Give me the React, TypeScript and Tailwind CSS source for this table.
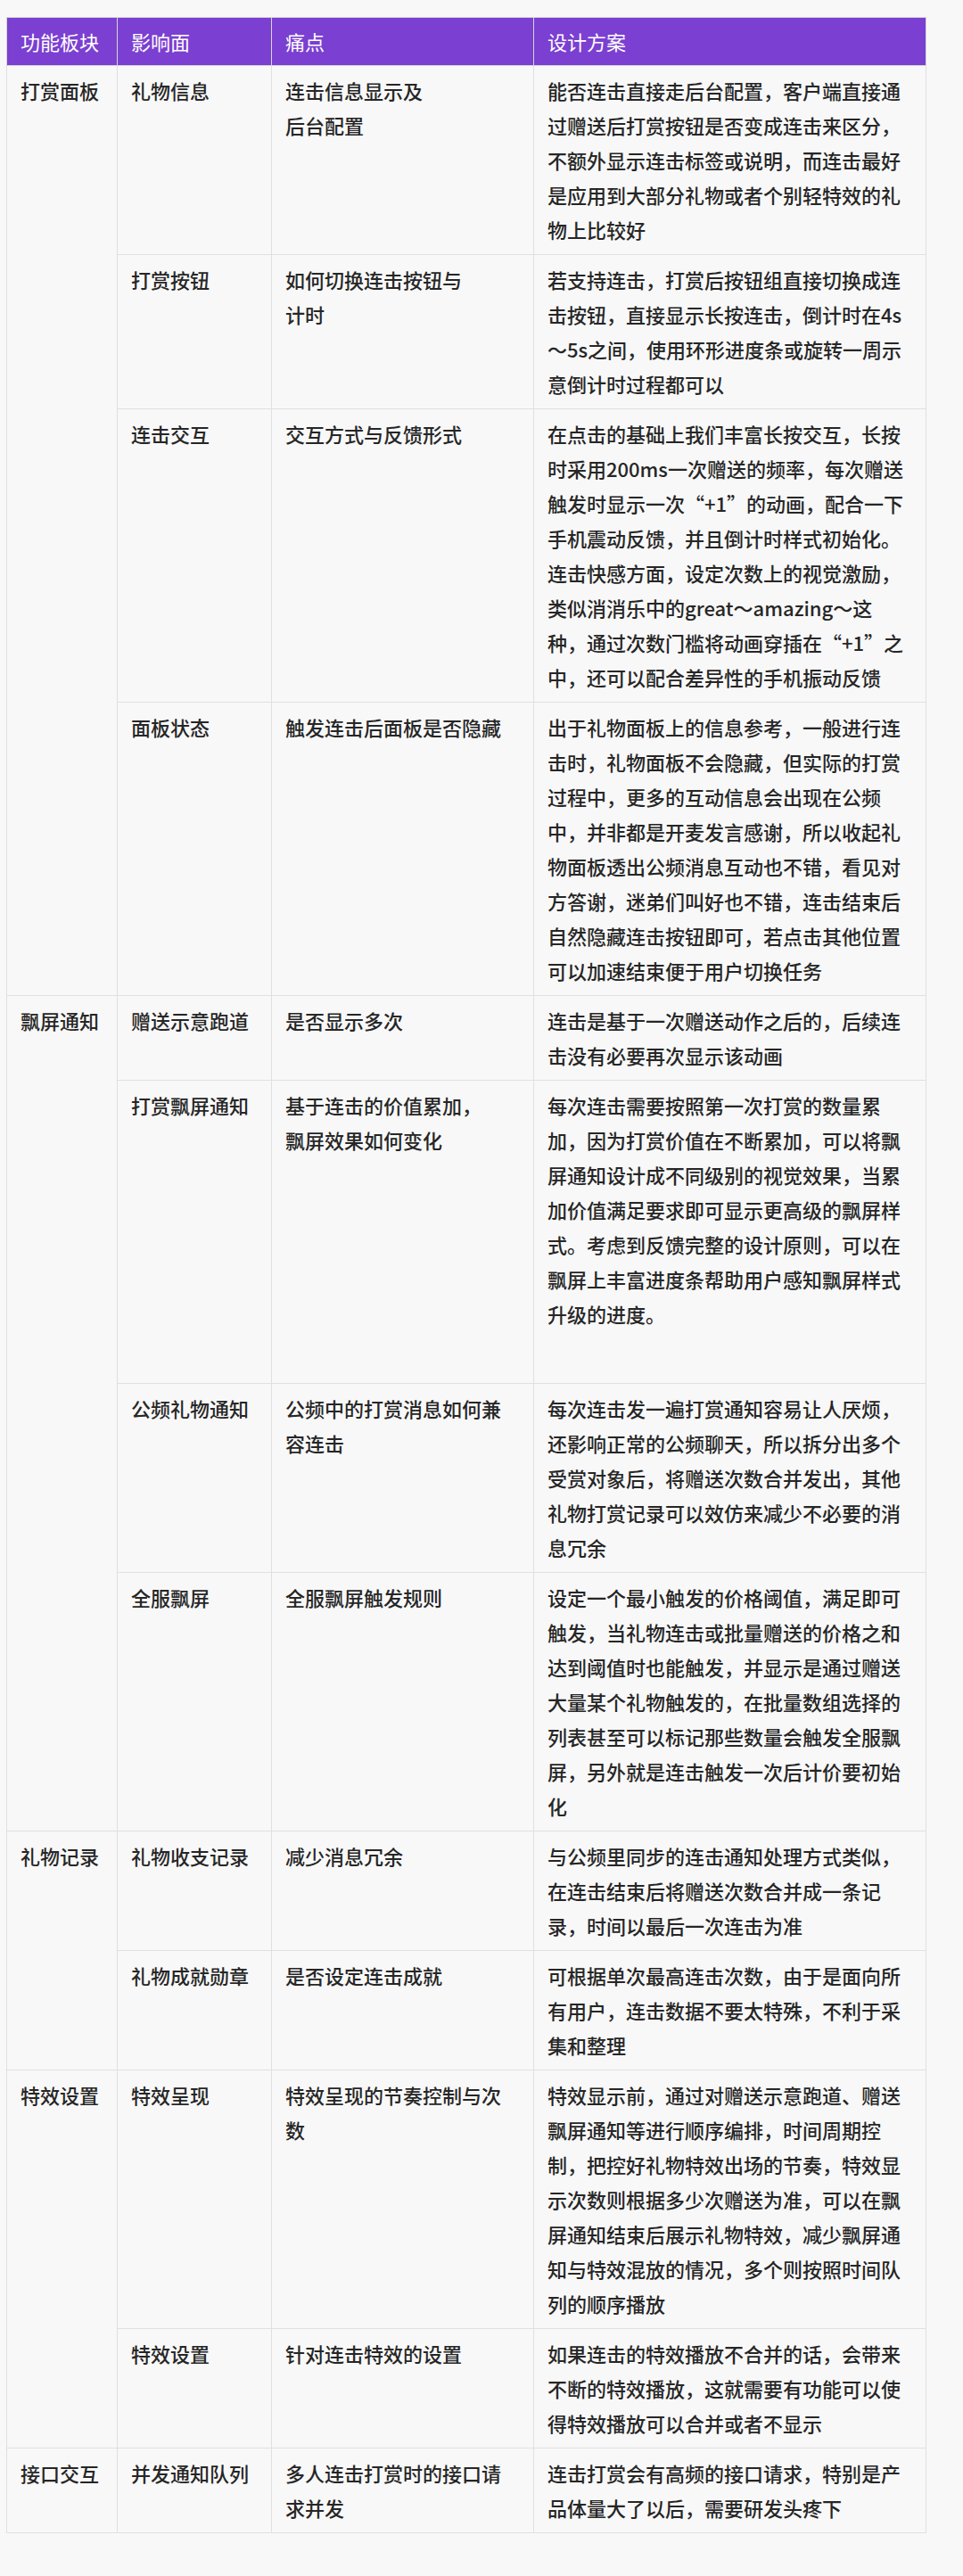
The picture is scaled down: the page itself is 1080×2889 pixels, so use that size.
type Row = {
  group?: { label: string; span: number };
  area: string;
  pain: string[];
  plan: string[];
  extra?: boolean;
};

const rows: Row[] = [
  {
    group: { label: "打赏面板", span: 4 },
    area: "礼物信息",
    pain: ["连击信息显示及", "后台配置"],
    plan: [
      "能否连击直接走后台配置，客户端直接通",
      "过赠送后打赏按钮是否变成连击来区分，",
      "不额外显示连击标签或说明，而连击最好",
      "是应用到大部分礼物或者个别轻特效的礼",
      "物上比较好",
    ],
  },
  {
    area: "打赏按钮",
    pain: ["如何切换连击按钮与", "计时"],
    plan: [
      "若支持连击，打赏后按钮组直接切换成连",
      "击按钮，直接显示长按连击，倒计时在4s",
      "～5s之间，使用环形进度条或旋转一周示",
      "意倒计时过程都可以",
    ],
  },
  {
    area: "连击交互",
    pain: ["交互方式与反馈形式"],
    plan: [
      "在点击的基础上我们丰富长按交互，长按",
      "时采用200ms一次赠送的频率，每次赠送",
      "触发时显示一次“+1”的动画，配合一下",
      "手机震动反馈，并且倒计时样式初始化。",
      "连击快感方面，设定次数上的视觉激励，",
      "类似消消乐中的great～amazing～这",
      "种，通过次数门槛将动画穿插在“+1”之",
      "中，还可以配合差异性的手机振动反馈",
    ],
  },
  {
    area: "面板状态",
    pain: ["触发连击后面板是否隐藏"],
    plan: [
      "出于礼物面板上的信息参考，一般进行连",
      "击时，礼物面板不会隐藏，但实际的打赏",
      "过程中，更多的互动信息会出现在公频",
      "中，并非都是开麦发言感谢，所以收起礼",
      "物面板透出公频消息互动也不错，看见对",
      "方答谢，迷弟们叫好也不错，连击结束后",
      "自然隐藏连击按钮即可，若点击其他位置",
      "可以加速结束便于用户切换任务",
    ],
  },
  {
    group: { label: "飘屏通知", span: 4 },
    area: "赠送示意跑道",
    pain: ["是否显示多次"],
    plan: ["连击是基于一次赠送动作之后的，后续连", "击没有必要再次显示该动画"],
  },
  {
    area: "打赏飘屏通知",
    pain: ["基于连击的价值累加，", "飘屏效果如何变化"],
    plan: [
      "每次连击需要按照第一次打赏的数量累",
      "加，因为打赏价值在不断累加，可以将飘",
      "屏通知设计成不同级别的视觉效果，当累",
      "加价值满足要求即可显示更高级的飘屏样",
      "式。考虑到反馈完整的设计原则，可以在",
      "飘屏上丰富进度条帮助用户感知飘屏样式",
      "升级的进度。",
    ],
    extra: true,
  },
  {
    area: "公频礼物通知",
    pain: ["公频中的打赏消息如何兼", "容连击"],
    plan: [
      "每次连击发一遍打赏通知容易让人厌烦，",
      "还影响正常的公频聊天，所以拆分出多个",
      "受赏对象后，将赠送次数合并发出，其他",
      "礼物打赏记录可以效仿来减少不必要的消",
      "息冗余",
    ],
  },
  {
    area: "全服飘屏",
    pain: ["全服飘屏触发规则"],
    plan: [
      "设定一个最小触发的价格阈值，满足即可",
      "触发，当礼物连击或批量赠送的价格之和",
      "达到阈值时也能触发，并显示是通过赠送",
      "大量某个礼物触发的，在批量数组选择的",
      "列表甚至可以标记那些数量会触发全服飘",
      "屏，另外就是连击触发一次后计价要初始",
      "化",
    ],
  },
  {
    group: { label: "礼物记录", span: 2 },
    area: "礼物收支记录",
    pain: ["减少消息冗余"],
    plan: [
      "与公频里同步的连击通知处理方式类似，",
      "在连击结束后将赠送次数合并成一条记",
      "录，时间以最后一次连击为准",
    ],
  },
  {
    area: "礼物成就勋章",
    pain: ["是否设定连击成就"],
    plan: [
      "可根据单次最高连击次数，由于是面向所",
      "有用户，连击数据不要太特殊，不利于采",
      "集和整理",
    ],
  },
  {
    group: { label: "特效设置", span: 2 },
    area: "特效呈现",
    pain: ["特效呈现的节奏控制与次", "数"],
    plan: [
      "特效显示前，通过对赠送示意跑道、赠送",
      "飘屏通知等进行顺序编排，时间周期控",
      "制，把控好礼物特效出场的节奏，特效显",
      "示次数则根据多少次赠送为准，可以在飘",
      "屏通知结束后展示礼物特效，减少飘屏通",
      "知与特效混放的情况，多个则按照时间队",
      "列的顺序播放",
    ],
  },
  {
    area: "特效设置",
    pain: ["针对连击特效的设置"],
    plan: [
      "如果连击的特效播放不合并的话，会带来",
      "不断的特效播放，这就需要有功能可以使",
      "得特效播放可以合并或者不显示",
    ],
  },
  {
    group: { label: "接口交互", span: 1 },
    area: "并发通知队列",
    pain: ["多人连击打赏时的接口请", "求并发"],
    plan: ["连击打赏会有高频的接口请求，特别是产", "品体量大了以后，需要研发头疼下"],
  },
];

function Lines({ lines }: { lines: string[] }) {
  return (
    <>
      {lines.map((l, i) => (
        <div key={i} className="h-[39px] whitespace-nowrap">
          {l}
        </div>
      ))}
    </>
  );
}

const cell =
  "border border-[#e0e0e0] bg-[#f8f8f8] px-[15px] py-[8px] align-top text-left font-medium";

export default function App() {
  return (
    <div
      className="min-h-[2889px] bg-[#f8f8f8] pl-[7px] pt-[19px] text-[22px] leading-[39px] text-[#262626]"
      style={{ fontFamily: "'Noto Sans CJK SC', 'Noto Sans', sans-serif" }}
    >
      <table className="w-[1031px] table-fixed border-collapse">
        <colgroup>
          <col className="w-[124px]" />
          <col className="w-[173px]" />
          <col className="w-[294px]" />
          <col className="w-[440px]" />
        </colgroup>
        <thead>
          <tr className="h-[54px]">
            {["功能板块", "影响面", "痛点", "设计方案"].map((h) => (
              <th
                key={h}
                className="border border-[#d6d6d6] bg-[#7b3fd1] px-[15px] py-0 text-left align-middle font-normal text-white"
              >
                {h}
              </th>
            ))}
          </tr>
        </thead>
        <tbody>
          {rows.map((r, i) => (
            <tr key={i}>
              {r.group && (
                <td rowSpan={r.group.span} className={cell}>
                  <div className="h-[39px] whitespace-nowrap">{r.group.label}</div>
                </td>
              )}
              <td className={cell}>
                <div className="h-[39px] whitespace-nowrap">{r.area}</div>
              </td>
              <td className={cell}>
                <Lines lines={r.pain} />
              </td>
              <td className={cell}>
                <Lines lines={r.plan} />
                {r.extra && <div className="h-[50px]" />}
              </td>
            </tr>
          ))}
        </tbody>
      </table>
    </div>
  );
}
